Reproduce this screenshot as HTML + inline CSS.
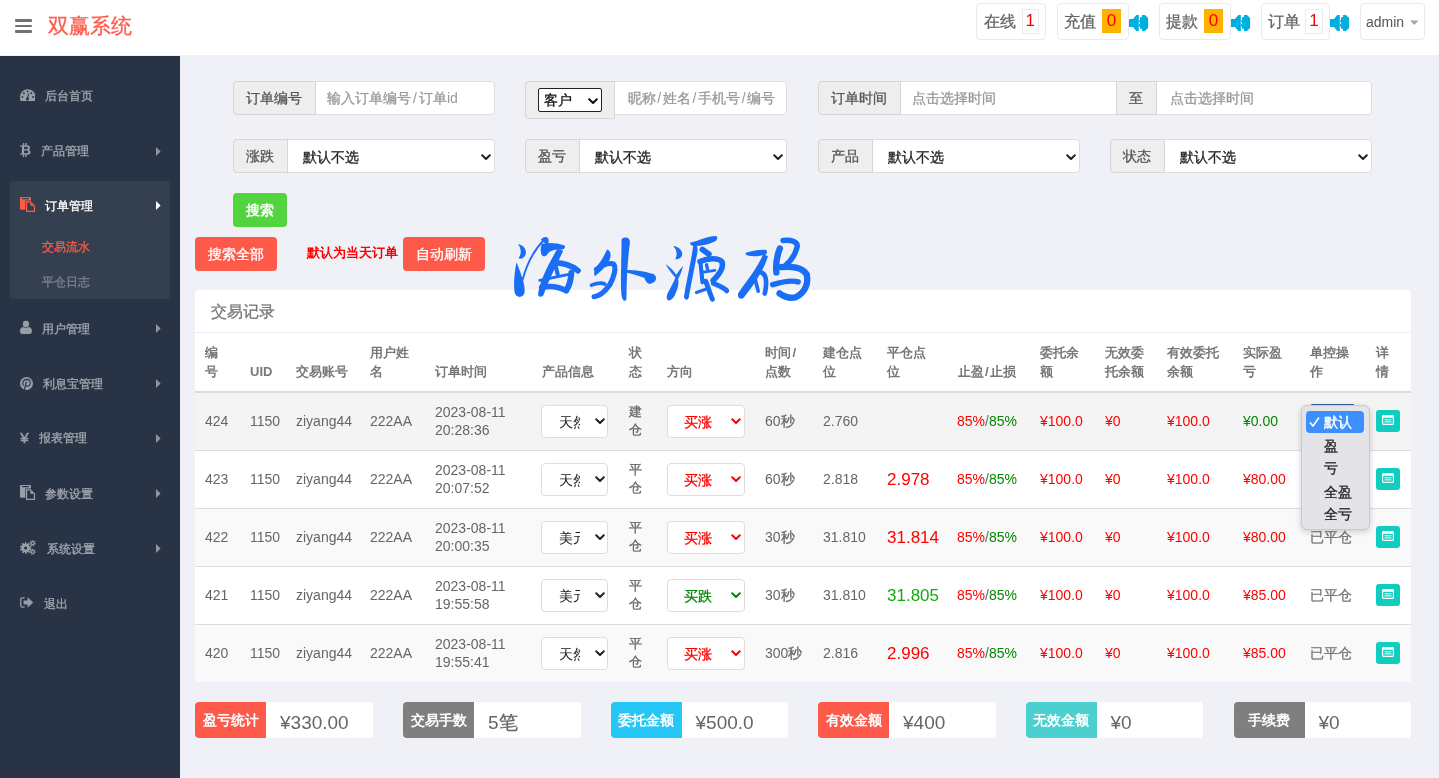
<!DOCTYPE html>
<html><head><meta charset="utf-8"><style>
html,body{margin:0;padding:0;width:1439px;height:778px;overflow:hidden;background:#f0f1f6}
body{position:relative;font-family:"Liberation Sans",sans-serif}
.a{position:absolute;white-space:nowrap}
svg{display:block}
.c{-webkit-text-stroke:0.3px currentColor}
</style></head><body><div id="w" style="position:absolute;left:0;top:0;width:1439px;height:778px;will-change:transform">
<div class="a" style="left:0px;top:0px;width:1439px;height:55px;background:#fff"></div>
<div class="a" style="left:15px;top:18.9px;width:17px;height:2.6999999999999993px;background:#717171;border-radius:1px"></div>
<div class="a" style="left:15px;top:24.5px;width:17px;height:2.6999999999999993px;background:#717171;border-radius:1px"></div>
<div class="a" style="left:15px;top:30.2px;width:17px;height:2.6999999999999993px;background:#717171;border-radius:1px"></div>
<div class="a" style="left:48px;top:10.5px;font-size:21px;line-height:30px;color:#ff5b4d;font-weight:normal;"><span class="c">双赢系统</span></div>
<div class="a" style="left:976px;top:3px;width:70px;height:37px;background:#fff;border:1px solid #e9e9f1;border-radius:4px;box-sizing:border-box"></div>
<div class="a" style="left:984px;top:9.5px;font-size:16px;line-height:24px;color:#666;font-weight:normal;"><span class="c">在线</span></div>
<div class="a" style="left:1021.5px;top:8.5px;width:17.5px;height:25.0px;background:#fff;border:1px solid #e6ecec;box-sizing:border-box"></div>
<div class="a" style="left:1021.5px;top:9px;width:17.5px;height:24px;line-height:24px;text-align:center;font-size:17px;color:#f00">1</div>
<div class="a" style="left:1056.5px;top:3px;width:72.0px;height:37px;background:#fff;border:1px solid #e9e9f1;border-radius:4px;box-sizing:border-box"></div>
<div class="a" style="left:1064px;top:9.5px;font-size:16px;line-height:24px;color:#666;font-weight:normal;"><span class="c">充值</span></div>
<div class="a" style="left:1102px;top:9px;width:19px;height:23.700000000000003px;background:#ffb300;"></div>
<div class="a" style="left:1102px;top:9px;width:19px;height:24px;line-height:24px;text-align:center;font-size:17px;color:#f00">0</div>
<svg class="a" style="left:1129px;top:14px" width="20" height="18" viewBox="0 0 20 18"><path fill="#01afdf" d="M0 5 H4 L7.3 1 H9.8 V17 H7.3 L4 13 H0 Z"/><path fill="#01afdf" d="M11 3.2 H13 V1 H16 L19.1 4 V14 L16 17 H13 V14.8 H11 Z"/><rect x="9.8" y="6.3" width="1.2" height="1.6" fill="#01afdf"/><rect x="9.8" y="10.2" width="1.2" height="2.4" fill="#01afdf"/></svg>
<div class="a" style="left:1158.5px;top:3px;width:72.0px;height:37px;background:#fff;border:1px solid #e9e9f1;border-radius:4px;box-sizing:border-box"></div>
<div class="a" style="left:1166px;top:9.5px;font-size:16px;line-height:24px;color:#666;font-weight:normal;"><span class="c">提款</span></div>
<div class="a" style="left:1204px;top:9px;width:19px;height:23.700000000000003px;background:#ffb300;"></div>
<div class="a" style="left:1204px;top:9px;width:19px;height:24px;line-height:24px;text-align:center;font-size:17px;color:#f00">0</div>
<svg class="a" style="left:1231px;top:14px" width="20" height="18" viewBox="0 0 20 18"><path fill="#01afdf" d="M0 5 H4 L7.3 1 H9.8 V17 H7.3 L4 13 H0 Z"/><path fill="#01afdf" d="M11 3.2 H13 V1 H16 L19.1 4 V14 L16 17 H13 V14.8 H11 Z"/><rect x="9.8" y="6.3" width="1.2" height="1.6" fill="#01afdf"/><rect x="9.8" y="10.2" width="1.2" height="2.4" fill="#01afdf"/></svg>
<div class="a" style="left:1260.5px;top:3px;width:69.0px;height:37px;background:#fff;border:1px solid #e9e9f1;border-radius:4px;box-sizing:border-box"></div>
<div class="a" style="left:1268px;top:9.5px;font-size:16px;line-height:24px;color:#666;font-weight:normal;"><span class="c">订单</span></div>
<div class="a" style="left:1305px;top:8.5px;width:18px;height:25.0px;background:#fff;border:1px solid #e6ecec;box-sizing:border-box"></div>
<div class="a" style="left:1305px;top:9px;width:18px;height:24px;line-height:24px;text-align:center;font-size:17px;color:#f00">1</div>
<svg class="a" style="left:1330px;top:14px" width="20" height="18" viewBox="0 0 20 18"><path fill="#01afdf" d="M0 5 H4 L7.3 1 H9.8 V17 H7.3 L4 13 H0 Z"/><path fill="#01afdf" d="M11 3.2 H13 V1 H16 L19.1 4 V14 L16 17 H13 V14.8 H11 Z"/><rect x="9.8" y="6.3" width="1.2" height="1.6" fill="#01afdf"/><rect x="9.8" y="10.2" width="1.2" height="2.4" fill="#01afdf"/></svg>
<div class="a" style="left:1359.5px;top:3px;width:65.5px;height:37px;background:#fff;border:1px solid #e9e9f1;border-radius:4px;box-sizing:border-box"></div>
<div class="a" style="left:1366px;top:12.0px;font-size:14px;line-height:20px;color:#555;font-weight:normal;">admin</div>
<svg class="a" style="left:1410px;top:20px" width="9" height="6" viewBox="0 0 9 6"><path d="M0 0.5 H8.5 L4.25 5 Z" fill="#a3a3b3"/></svg>
<div class="a" style="left:0px;top:55px;width:1439px;height:723px;background:#f0f1f6"></div>
<div class="a" style="left:0px;top:56px;width:180px;height:722px;background:#283445"></div>
<div class="a" style="left:10px;top:181px;width:160px;height:118px;background:#343f4f;border-radius:4px"></div>
<div class="a" style="left:45px;top:86.5px;font-size:12px;line-height:18px;color:#a2a7ae;font-weight:normal;"><span class="c">后台首页</span></div>
<div class="a" style="left:41px;top:142.0px;font-size:12px;line-height:18px;color:#a2a7ae;font-weight:normal;"><span class="c">产品管理</span></div>
<svg class="a" style="left:156px;top:146.5px" width="5" height="9" viewBox="0 0 5 9"><path d="M0 0 L4.6 4.5 L0 9 Z" fill="#8f969f"/></svg>
<div class="a" style="left:45px;top:196.5px;font-size:12px;line-height:18px;color:#fff;font-weight:normal;"><span class="c">订单管理</span></div>
<svg class="a" style="left:156px;top:201.0px" width="5" height="9" viewBox="0 0 5 9"><path d="M0 0 L4.6 4.5 L0 9 Z" fill="#fff"/></svg>
<div class="a" style="left:42px;top:319.5px;font-size:12px;line-height:18px;color:#a2a7ae;font-weight:normal;"><span class="c">用户管理</span></div>
<svg class="a" style="left:156px;top:324.0px" width="5" height="9" viewBox="0 0 5 9"><path d="M0 0 L4.6 4.5 L0 9 Z" fill="#8f969f"/></svg>
<div class="a" style="left:43px;top:374.5px;font-size:12px;line-height:18px;color:#a2a7ae;font-weight:normal;"><span class="c">利息宝管理</span></div>
<svg class="a" style="left:156px;top:379.0px" width="5" height="9" viewBox="0 0 5 9"><path d="M0 0 L4.6 4.5 L0 9 Z" fill="#8f969f"/></svg>
<div class="a" style="left:39px;top:429.0px;font-size:12px;line-height:18px;color:#a2a7ae;font-weight:normal;"><span class="c">报表管理</span></div>
<svg class="a" style="left:156px;top:433.5px" width="5" height="9" viewBox="0 0 5 9"><path d="M0 0 L4.6 4.5 L0 9 Z" fill="#8f969f"/></svg>
<div class="a" style="left:45px;top:484.5px;font-size:12px;line-height:18px;color:#a2a7ae;font-weight:normal;"><span class="c">参数设置</span></div>
<svg class="a" style="left:156px;top:489.0px" width="5" height="9" viewBox="0 0 5 9"><path d="M0 0 L4.6 4.5 L0 9 Z" fill="#8f969f"/></svg>
<div class="a" style="left:47px;top:539.5px;font-size:12px;line-height:18px;color:#a2a7ae;font-weight:normal;"><span class="c">系统设置</span></div>
<svg class="a" style="left:156px;top:544.0px" width="5" height="9" viewBox="0 0 5 9"><path d="M0 0 L4.6 4.5 L0 9 Z" fill="#8f969f"/></svg>
<div class="a" style="left:44px;top:594.5px;font-size:12px;line-height:18px;color:#a2a7ae;font-weight:normal;"><span class="c">退出</span></div>
<div class="a" style="left:42px;top:237.5px;font-size:12px;line-height:18px;color:#fd5a4a;font-weight:normal;"><span class="c">交易流水</span></div>
<div class="a" style="left:42px;top:272.5px;font-size:12px;line-height:18px;color:#7a838e;font-weight:normal;"><span class="c">平仓日志</span></div>
<svg class="a" style="left:19.9px;top:88.9px" width="15.5" height="12.3" viewBox="0 0 15.5 12.3"><path d="M0.7 12.3 Q0 10.6 0 7.9 A7.75 7.75 0 0 1 15.5 7.9 Q15.5 10.6 14.8 12.3 Z" fill="#989ea7"/><circle cx="7.5" cy="9.9" r="1.55" fill="#283445"/><path d="M7.3 9.8 L8.7 4.6" stroke="#283445" stroke-width="1.1"/><circle cx="2.4" cy="8" r="0.95" fill="#283445"/><circle cx="13.1" cy="8" r="0.95" fill="#283445"/><circle cx="3.9" cy="4.2" r="0.95" fill="#283445"/><circle cx="7.6" cy="2.5" r="0.9" fill="#283445"/><circle cx="11.3" cy="4.2" r="0.95" fill="#283445"/></svg>
<svg class="a" style="left:20px;top:143px" width="11" height="14" viewBox="0 0 11 14"><path fill-rule="evenodd" fill="#989ea7" d="M0.3 2.3 H7 Q10 2.3 10 5 Q10 6.3 8.9 6.9 Q10.6 7.6 10.6 9.3 Q10.6 11.7 7.4 11.7 H0.3 V10.6 H1.9 V3.4 H0.3 Z M4.1 3.7 V6.2 H6.6 Q7.9 6.2 7.9 4.95 Q7.9 3.7 6.6 3.7 Z M4.1 7.6 V10.3 H6.9 Q8.3 10.3 8.3 8.95 Q8.3 7.6 6.9 7.6 Z"/><rect x="2.9" y="0" width="1.3" height="2.5" fill="#989ea7"/><rect x="5.4" y="0" width="1.3" height="2.5" fill="#989ea7"/><rect x="2.9" y="11.5" width="1.3" height="2.5" fill="#989ea7"/><rect x="5.4" y="11.5" width="1.3" height="2.5" fill="#989ea7"/></svg>
<svg class="a" style="left:19.5px;top:197px" width="16" height="16" viewBox="0 0 16 16"><rect x="0" y="0" width="11" height="12.8" rx="1" fill="#fd5a4a"/><rect x="2.1" y="1.1" width="6.8" height="1.1" rx="0.5" fill="#343f4f"/><path d="M5.3 3.6 H10.9 L15.8 8.5 V15.7 H5.3 Z" fill="#343f4f"/><path d="M6.55 4.85 H10.4 L14.45 8.9 V14.35 H6.55 Z" fill="none" stroke="#fd5a4a" stroke-width="1.3"/><path d="M10.4 5.2 V8.8 H14 Z" fill="#fd5a4a"/></svg>
<svg class="a" style="left:20px;top:320px" width="12" height="14" viewBox="0 0 12 14"><path d="M0 11.3 Q0 7.4 3.2 7 H8.7 Q11.9 7.4 11.9 11.3 Q11.9 14 9.4 14 H2.5 Q0 14 0 11.3 Z" fill="#989ea7"/><circle cx="5.95" cy="4" r="3.8" fill="#283445"/><circle cx="5.95" cy="4" r="3.15" fill="#989ea7"/></svg>
<svg class="a" style="left:20px;top:376.5px" width="13" height="13" viewBox="0 0 13 13"><circle cx="6.5" cy="6.5" r="6.5" fill="#989ea7"/><path d="M3.6 8.6 Q2.6 7.4 2.9 5.6 Q3.5 2.4 6.8 2.4 Q10.2 2.5 10.3 5.7 Q10.2 9.3 7.2 9.3 Q6 9.2 5.7 8.5" fill="none" stroke="#283445" stroke-width="1.1"/><path d="M4.3 12.8 L6.4 4.6" stroke="#283445" stroke-width="1.2"/></svg>
<div class="a" style="left:20.2px;top:427.6px;font-size:15px;line-height:20px;color:#989ea7;-webkit-text-stroke:0.55px #989ea7">&#165;</div>
<svg class="a" style="left:19.9px;top:485px" width="16" height="16" viewBox="0 0 16 16"><rect x="0" y="0" width="11" height="12.8" rx="1" fill="#989ea7"/><rect x="2.1" y="1.1" width="6.8" height="1.1" rx="0.5" fill="#283445"/><path d="M5.3 3.6 H10.9 L15.8 8.5 V15.7 H5.3 Z" fill="#283445"/><path d="M6.55 4.85 H10.4 L14.45 8.9 V14.35 H6.55 Z" fill="none" stroke="#989ea7" stroke-width="1.3"/><path d="M10.4 5.2 V8.8 H14 Z" fill="#989ea7"/></svg>
<svg class="a" style="left:20px;top:540px" width="16" height="15" viewBox="0 0 16 15"><circle cx="5.6" cy="8" r="4.6" fill="none" stroke="#989ea7" stroke-width="2.2" stroke-dasharray="1.7 1.2"/><circle cx="5.6" cy="8" r="2.9" fill="none" stroke="#989ea7" stroke-width="2.6"/><circle cx="12.6" cy="3.2" r="2.4" fill="none" stroke="#989ea7" stroke-width="1.3" stroke-dasharray="1 0.9"/><circle cx="12.6" cy="3.2" r="1.5" fill="none" stroke="#989ea7" stroke-width="1.2"/><circle cx="12.6" cy="11.8" r="2.4" fill="none" stroke="#989ea7" stroke-width="1.3" stroke-dasharray="1 0.9"/><circle cx="12.6" cy="11.8" r="1.5" fill="none" stroke="#989ea7" stroke-width="1.2"/></svg>
<svg class="a" style="left:20px;top:597px" width="14" height="11" viewBox="0 0 14 11"><path d="M4.6 0.8 H2.4 Q0.8 0.8 0.8 2.4 V8.6 Q0.8 10.2 2.4 10.2 H4.6" fill="none" stroke="#989ea7" stroke-width="1.3"/><path d="M3.6 3.5 H7.6 V0.3 L13.2 5.5 L7.6 10.7 V7.5 H3.6 Z" fill="#989ea7"/></svg>
<div class="a" style="left:233px;top:81px;width:261.5px;height:34px;background:#fff;border:1px solid #ddd;border-radius:4px;box-sizing:border-box"></div>
<div class="a" style="left:233px;top:81px;width:82.5px;height:34px;background:#eee;border:1px solid #d6d6d6;border-radius:4px 0 0 4px;box-sizing:border-box"></div>
<div class="a" style="left:245.5px;top:88.0px;font-size:14px;line-height:20px;color:#555;font-weight:normal;"><span class="c">订单编号</span></div>
<div class="a" style="left:327px;top:88.0px;font-size:14px;line-height:20px;color:#999;font-weight:normal;"><span class="c">输入订单编号</span><span style="margin:0 2px">/</span><span class="c">订单</span>id</div>
<div class="a" style="left:525px;top:81px;width:262px;height:34px;background:#fff;border:1px solid #ddd;border-radius:4px;box-sizing:border-box"></div>
<div class="a" style="left:525px;top:81px;width:90px;height:38px;background:#eee;border:1px solid #d6d6d6;border-radius:4px 0 0 4px;box-sizing:border-box"></div>
<div class="a" style="left:538px;top:88px;width:64px;height:24px;background:#fff;border:1px solid #222;border-radius:2px;box-sizing:border-box"></div>
<div class="a" style="left:543.5px;top:89.5px;font-size:14px;line-height:20px;color:#111;font-weight:normal;"><span class="c">客户</span></div>
<div class="a" style="left:588px;top:97.5px"><svg width="10" height="7" viewBox="0 0 10 7"><path d="M1.2 1.2 L5 5 L8.8 1.2" fill="none" stroke="#111" stroke-width="2" stroke-linecap="round" stroke-linejoin="round"/></svg></div>
<div class="a" style="left:627.5px;top:88.0px;font-size:14px;line-height:20px;color:#999;font-weight:normal;"><span class="c">昵称</span><span style="margin:0 1.7px">/</span><span class="c">姓名</span><span style="margin:0 1.7px">/</span><span class="c">手机号</span><span style="margin:0 1.7px">/</span><span class="c">编号</span></div>
<div class="a" style="left:818px;top:81px;width:554px;height:34px;background:#fff;border:1px solid #ddd;border-radius:4px;box-sizing:border-box"></div>
<div class="a" style="left:818px;top:81px;width:82.5px;height:34px;background:#eee;border:1px solid #d6d6d6;border-radius:4px 0 0 4px;box-sizing:border-box"></div>
<div class="a" style="left:830.5px;top:88.0px;font-size:14px;line-height:20px;color:#555;font-weight:normal;"><span class="c">订单时间</span></div>
<div class="a" style="left:912px;top:88.0px;font-size:14px;line-height:20px;color:#999;font-weight:normal;"><span class="c">点击选择时间</span></div>
<div class="a" style="left:1116px;top:81px;width:40.5px;height:34px;background:#eee;border:1px solid #d6d6d6;box-sizing:border-box"></div>
<div class="a" style="left:1128.5px;top:88.0px;font-size:14px;line-height:20px;color:#555;font-weight:normal;"><span class="c">至</span></div>
<div class="a" style="left:1169.5px;top:88.0px;font-size:14px;line-height:20px;color:#999;font-weight:normal;"><span class="c">点击选择时间</span></div>
<div class="a" style="left:233px;top:139px;width:261.5px;height:34px;background:#fff;border:1px solid #ddd;border-radius:4px;box-sizing:border-box"></div>
<div class="a" style="left:233px;top:139px;width:54.5px;height:34px;background:#eee;border:1px solid #d6d6d6;border-radius:4px 0 0 4px;box-sizing:border-box"></div>
<div class="a" style="left:245.5px;top:146.0px;font-size:14px;line-height:20px;color:#555;font-weight:normal;"><span class="c">涨跌</span></div>
<div class="a" style="left:302.5px;top:147.0px;font-size:14px;line-height:20px;color:#222;font-weight:normal;"><span class="c">默认不选</span></div>
<div class="a" style="left:480.5px;top:153.5px"><svg width="10" height="7" viewBox="0 0 10 7"><path d="M1.2 1.2 L5 5 L8.8 1.2" fill="none" stroke="#222" stroke-width="2" stroke-linecap="round" stroke-linejoin="round"/></svg></div>
<div class="a" style="left:525px;top:139px;width:262px;height:34px;background:#fff;border:1px solid #ddd;border-radius:4px;box-sizing:border-box"></div>
<div class="a" style="left:525px;top:139px;width:54.5px;height:34px;background:#eee;border:1px solid #d6d6d6;border-radius:4px 0 0 4px;box-sizing:border-box"></div>
<div class="a" style="left:537.5px;top:146.0px;font-size:14px;line-height:20px;color:#555;font-weight:normal;"><span class="c">盈亏</span></div>
<div class="a" style="left:594.5px;top:147.0px;font-size:14px;line-height:20px;color:#222;font-weight:normal;"><span class="c">默认不选</span></div>
<div class="a" style="left:773px;top:153.5px"><svg width="10" height="7" viewBox="0 0 10 7"><path d="M1.2 1.2 L5 5 L8.8 1.2" fill="none" stroke="#222" stroke-width="2" stroke-linecap="round" stroke-linejoin="round"/></svg></div>
<div class="a" style="left:818px;top:139px;width:261.5px;height:34px;background:#fff;border:1px solid #ddd;border-radius:4px;box-sizing:border-box"></div>
<div class="a" style="left:818px;top:139px;width:54.5px;height:34px;background:#eee;border:1px solid #d6d6d6;border-radius:4px 0 0 4px;box-sizing:border-box"></div>
<div class="a" style="left:830.5px;top:146.0px;font-size:14px;line-height:20px;color:#555;font-weight:normal;"><span class="c">产品</span></div>
<div class="a" style="left:887.5px;top:147.0px;font-size:14px;line-height:20px;color:#222;font-weight:normal;"><span class="c">默认不选</span></div>
<div class="a" style="left:1065.5px;top:153.5px"><svg width="10" height="7" viewBox="0 0 10 7"><path d="M1.2 1.2 L5 5 L8.8 1.2" fill="none" stroke="#222" stroke-width="2" stroke-linecap="round" stroke-linejoin="round"/></svg></div>
<div class="a" style="left:1110px;top:139px;width:262px;height:34px;background:#fff;border:1px solid #ddd;border-radius:4px;box-sizing:border-box"></div>
<div class="a" style="left:1110px;top:139px;width:54.5px;height:34px;background:#eee;border:1px solid #d6d6d6;border-radius:4px 0 0 4px;box-sizing:border-box"></div>
<div class="a" style="left:1122.5px;top:146.0px;font-size:14px;line-height:20px;color:#555;font-weight:normal;"><span class="c">状态</span></div>
<div class="a" style="left:1179.5px;top:147.0px;font-size:14px;line-height:20px;color:#222;font-weight:normal;"><span class="c">默认不选</span></div>
<div class="a" style="left:1358px;top:153.5px"><svg width="10" height="7" viewBox="0 0 10 7"><path d="M1.2 1.2 L5 5 L8.8 1.2" fill="none" stroke="#222" stroke-width="2" stroke-linecap="round" stroke-linejoin="round"/></svg></div>
<div class="a" style="left:233px;top:193px;width:54px;height:34px;background:#52d43f;border-radius:4px"></div>
<div class="a" style="left:246px;top:200.0px;font-size:14px;line-height:20px;color:#fff;font-weight:bold;">搜索</div>
<div class="a" style="left:195px;top:237px;width:82px;height:34px;background:#fd5a4a;border-radius:4px"></div>
<div class="a" style="left:208px;top:244.0px;font-size:14px;line-height:20px;color:#fff;font-weight:normal;"><span class="c">搜索全部</span></div>
<div class="a" style="left:307px;top:243.5px;font-size:13px;line-height:18px;color:#f00;font-weight:bold;">默认为当天订单</div>
<div class="a" style="left:403px;top:237px;width:82px;height:34px;background:#fd5a4a;border-radius:4px"></div>
<div class="a" style="left:416px;top:244.0px;font-size:14px;line-height:20px;color:#fff;font-weight:normal;"><span class="c">自动刷新</span></div>
<div class="a" style="left:195px;top:290px;width:1216px;height:392px;background:#fff;border-radius:4px"></div>
<div class="a" style="left:210.5px;top:300.5px;font-size:16px;line-height:22px;color:#777;font-weight:normal;"><span class="c">交易记录</span></div>
<div class="a" style="left:195px;top:332px;width:1216px;height:1px;background:#edf0f5"></div>
<div class="a" style="left:195px;top:391px;width:1216px;height:2px;background:#dcdcdc"></div>
<div class="a" style="left:205px;top:343.0px;font-size:13px;line-height:19px;color:#777;font-weight:bold;">编</div>
<div class="a" style="left:205px;top:362.0px;font-size:13px;line-height:19px;color:#777;font-weight:bold;">号</div>
<div class="a" style="left:250px;top:362.0px;font-size:13px;line-height:19px;color:#777;font-weight:bold;">UID</div>
<div class="a" style="left:296px;top:362.0px;font-size:13px;line-height:19px;color:#777;font-weight:bold;">交易账号</div>
<div class="a" style="left:370px;top:343.0px;font-size:13px;line-height:19px;color:#777;font-weight:bold;">用户姓</div>
<div class="a" style="left:370px;top:362.0px;font-size:13px;line-height:19px;color:#777;font-weight:bold;">名</div>
<div class="a" style="left:435px;top:362.0px;font-size:13px;line-height:19px;color:#777;font-weight:bold;">订单时间</div>
<div class="a" style="left:541.5px;top:362.0px;font-size:13px;line-height:19px;color:#777;font-weight:bold;">产品信息</div>
<div class="a" style="left:628.5px;top:343.0px;font-size:13px;line-height:19px;color:#777;font-weight:bold;">状</div>
<div class="a" style="left:628.5px;top:362.0px;font-size:13px;line-height:19px;color:#777;font-weight:bold;">态</div>
<div class="a" style="left:667px;top:362.0px;font-size:13px;line-height:19px;color:#777;font-weight:bold;">方向</div>
<div class="a" style="left:765px;top:343.0px;font-size:13px;line-height:19px;color:#777;font-weight:bold;">时间<span style="margin:0 1.5px">/</span></div>
<div class="a" style="left:765px;top:362.0px;font-size:13px;line-height:19px;color:#777;font-weight:bold;">点数</div>
<div class="a" style="left:823px;top:343.0px;font-size:13px;line-height:19px;color:#777;font-weight:bold;">建仓点</div>
<div class="a" style="left:823px;top:362.0px;font-size:13px;line-height:19px;color:#777;font-weight:bold;">位</div>
<div class="a" style="left:887px;top:343.0px;font-size:13px;line-height:19px;color:#777;font-weight:bold;">平仓点</div>
<div class="a" style="left:887px;top:362.0px;font-size:13px;line-height:19px;color:#777;font-weight:bold;">位</div>
<div class="a" style="left:957.5px;top:362.0px;font-size:13px;line-height:19px;color:#777;font-weight:bold;">止盈<span style="margin:0 1.5px">/</span>止损</div>
<div class="a" style="left:1040px;top:343.0px;font-size:13px;line-height:19px;color:#777;font-weight:bold;">委托余</div>
<div class="a" style="left:1040px;top:362.0px;font-size:13px;line-height:19px;color:#777;font-weight:bold;">额</div>
<div class="a" style="left:1105px;top:343.0px;font-size:13px;line-height:19px;color:#777;font-weight:bold;">无效委</div>
<div class="a" style="left:1105px;top:362.0px;font-size:13px;line-height:19px;color:#777;font-weight:bold;">托余额</div>
<div class="a" style="left:1167px;top:343.0px;font-size:13px;line-height:19px;color:#777;font-weight:bold;">有效委托</div>
<div class="a" style="left:1167px;top:362.0px;font-size:13px;line-height:19px;color:#777;font-weight:bold;">余额</div>
<div class="a" style="left:1243px;top:343.0px;font-size:13px;line-height:19px;color:#777;font-weight:bold;">实际盈</div>
<div class="a" style="left:1243px;top:362.0px;font-size:13px;line-height:19px;color:#777;font-weight:bold;">亏</div>
<div class="a" style="left:1310px;top:343.0px;font-size:13px;line-height:19px;color:#777;font-weight:bold;">单控操</div>
<div class="a" style="left:1310px;top:362.0px;font-size:13px;line-height:19px;color:#777;font-weight:bold;">作</div>
<div class="a" style="left:1376px;top:343.0px;font-size:13px;line-height:19px;color:#777;font-weight:bold;">详</div>
<div class="a" style="left:1376px;top:362.0px;font-size:13px;line-height:19px;color:#777;font-weight:bold;">情</div>
<div class="a" style="left:195px;top:393px;width:1216px;height:57px;background:#f4f4f4"></div>
<div class="a" style="left:195px;top:450px;width:1216px;height:1px;background:#ddd"></div>
<div class="a" style="left:205px;top:410.8px;font-size:14px;line-height:20px;color:#666;font-weight:normal;">424</div>
<div class="a" style="left:250px;top:410.8px;font-size:14px;line-height:20px;color:#666;font-weight:normal;">1150</div>
<div class="a" style="left:296px;top:410.8px;font-size:14px;line-height:20px;color:#666;font-weight:normal;">ziyang44</div>
<div class="a" style="left:370px;top:410.8px;font-size:14px;line-height:20px;color:#666;font-weight:normal;">222AA</div>
<div class="a" style="left:435px;top:402.8px;font-size:14px;line-height:18px;color:#666;font-weight:normal;">2023-08-11</div>
<div class="a" style="left:435px;top:420.8px;font-size:14px;line-height:18px;color:#666;font-weight:normal;">20:28:36</div>
<div class="a" style="left:541px;top:404.5px;width:66.5px;height:33.0px;background:#fff;border:1px solid #ddd;border-radius:4px;box-sizing:border-box"></div>
<div class="a" style="left:558.5px;top:411.8px;width:21px;overflow:hidden;white-space:nowrap;font-size:14px;line-height:20px;color:#222">天然</div>
<div class="a" style="left:594.5px;top:418.3px"><svg width="10" height="7" viewBox="0 0 10 7"><path d="M1.2 1.2 L5 5 L8.8 1.2" fill="none" stroke="#222" stroke-width="2" stroke-linecap="round" stroke-linejoin="round"/></svg></div>
<div class="a" style="left:628.5px;top:402.8px;font-size:13px;line-height:18px;color:#666;font-weight:normal;"><span class="c">建</span></div>
<div class="a" style="left:628.5px;top:420.8px;font-size:13px;line-height:18px;color:#666;font-weight:normal;"><span class="c">仓</span></div>
<div class="a" style="left:667px;top:404.5px;width:77.5px;height:33.0px;background:#fff;border:1px solid #ddd;border-radius:4px;box-sizing:border-box"></div>
<div class="a" style="left:684px;top:411.8px;font-size:14px;line-height:20px;color:#f00;font-weight:normal;"><span class="c">买涨</span></div>
<div class="a" style="left:731px;top:418.3px"><svg width="10" height="7" viewBox="0 0 10 7"><path d="M1.2 1.2 L5 5 L8.8 1.2" fill="none" stroke="#f00" stroke-width="2" stroke-linecap="round" stroke-linejoin="round"/></svg></div>
<div class="a" style="left:765px;top:410.8px;font-size:14px;line-height:20px;color:#666;font-weight:normal;">60<span class="c">秒</span></div>
<div class="a" style="left:823px;top:410.8px;font-size:14px;line-height:20px;color:#666;font-weight:normal;">2.760</div>
<div class="a" style="left:957px;top:410.8px;font-size:14px;line-height:20px;color:#666;font-weight:normal;"><span style="color:#f00">85%</span>/<span style="color:#080">85%</span></div>
<div class="a" style="left:1040px;top:410.8px;font-size:14px;line-height:20px;color:#f00;font-weight:normal;">¥100.0</div>
<div class="a" style="left:1105px;top:410.8px;font-size:14px;line-height:20px;color:#f00;font-weight:normal;">¥0</div>
<div class="a" style="left:1167px;top:410.8px;font-size:14px;line-height:20px;color:#f00;font-weight:normal;">¥100.0</div>
<div class="a" style="left:1243px;top:410.8px;font-size:14px;line-height:20px;color:#080;font-weight:normal;">¥0.00</div>
<div class="a" style="left:1376px;top:409.8px;width:24px;height:22.0px;background:#0fcebf;border-radius:3px"></div>
<svg class="a" style="left:1382px;top:415.3px" width="12" height="10" viewBox="0 0 12 10"><rect x="0.6" y="0.6" width="10.8" height="8.8" rx="1" fill="none" stroke="#fff" stroke-width="1.2"/><rect x="0.6" y="0.6" width="10.8" height="2.2" fill="#fff"/><rect x="2.5" y="4.3" width="7" height="1" fill="#fff"/><rect x="2.5" y="6.4" width="7" height="1" fill="#fff"/></svg>
<div class="a" style="left:195px;top:451px;width:1216px;height:57px;background:#fff"></div>
<div class="a" style="left:195px;top:508px;width:1216px;height:1px;background:#ddd"></div>
<div class="a" style="left:205px;top:468.8px;font-size:14px;line-height:20px;color:#666;font-weight:normal;">423</div>
<div class="a" style="left:250px;top:468.8px;font-size:14px;line-height:20px;color:#666;font-weight:normal;">1150</div>
<div class="a" style="left:296px;top:468.8px;font-size:14px;line-height:20px;color:#666;font-weight:normal;">ziyang44</div>
<div class="a" style="left:370px;top:468.8px;font-size:14px;line-height:20px;color:#666;font-weight:normal;">222AA</div>
<div class="a" style="left:435px;top:460.8px;font-size:14px;line-height:18px;color:#666;font-weight:normal;">2023-08-11</div>
<div class="a" style="left:435px;top:478.8px;font-size:14px;line-height:18px;color:#666;font-weight:normal;">20:07:52</div>
<div class="a" style="left:541px;top:462.5px;width:66.5px;height:33.0px;background:#fff;border:1px solid #ddd;border-radius:4px;box-sizing:border-box"></div>
<div class="a" style="left:558.5px;top:469.8px;width:21px;overflow:hidden;white-space:nowrap;font-size:14px;line-height:20px;color:#222">天然</div>
<div class="a" style="left:594.5px;top:476.3px"><svg width="10" height="7" viewBox="0 0 10 7"><path d="M1.2 1.2 L5 5 L8.8 1.2" fill="none" stroke="#222" stroke-width="2" stroke-linecap="round" stroke-linejoin="round"/></svg></div>
<div class="a" style="left:628.5px;top:460.8px;font-size:13px;line-height:18px;color:#666;font-weight:normal;"><span class="c">平</span></div>
<div class="a" style="left:628.5px;top:478.8px;font-size:13px;line-height:18px;color:#666;font-weight:normal;"><span class="c">仓</span></div>
<div class="a" style="left:667px;top:462.5px;width:77.5px;height:33.0px;background:#fff;border:1px solid #ddd;border-radius:4px;box-sizing:border-box"></div>
<div class="a" style="left:684px;top:469.8px;font-size:14px;line-height:20px;color:#f00;font-weight:normal;"><span class="c">买涨</span></div>
<div class="a" style="left:731px;top:476.3px"><svg width="10" height="7" viewBox="0 0 10 7"><path d="M1.2 1.2 L5 5 L8.8 1.2" fill="none" stroke="#f00" stroke-width="2" stroke-linecap="round" stroke-linejoin="round"/></svg></div>
<div class="a" style="left:765px;top:468.8px;font-size:14px;line-height:20px;color:#666;font-weight:normal;">60<span class="c">秒</span></div>
<div class="a" style="left:823px;top:468.8px;font-size:14px;line-height:20px;color:#666;font-weight:normal;">2.818</div>
<div class="a" style="left:887px;top:469.3px;font-size:17px;line-height:22px;color:#f00;font-weight:normal;">2.978</div>
<div class="a" style="left:957px;top:468.8px;font-size:14px;line-height:20px;color:#666;font-weight:normal;"><span style="color:#f00">85%</span>/<span style="color:#080">85%</span></div>
<div class="a" style="left:1040px;top:468.8px;font-size:14px;line-height:20px;color:#f00;font-weight:normal;">¥100.0</div>
<div class="a" style="left:1105px;top:468.8px;font-size:14px;line-height:20px;color:#f00;font-weight:normal;">¥0</div>
<div class="a" style="left:1167px;top:468.8px;font-size:14px;line-height:20px;color:#f00;font-weight:normal;">¥100.0</div>
<div class="a" style="left:1243px;top:468.8px;font-size:14px;line-height:20px;color:#f00;font-weight:normal;">¥80.00</div>
<div class="a" style="left:1310px;top:468.8px;font-size:14px;line-height:20px;color:#777;font-weight:normal;"><span class="c">已平仓</span></div>
<div class="a" style="left:1376px;top:467.8px;width:24px;height:22.0px;background:#0fcebf;border-radius:3px"></div>
<svg class="a" style="left:1382px;top:473.3px" width="12" height="10" viewBox="0 0 12 10"><rect x="0.6" y="0.6" width="10.8" height="8.8" rx="1" fill="none" stroke="#fff" stroke-width="1.2"/><rect x="0.6" y="0.6" width="10.8" height="2.2" fill="#fff"/><rect x="2.5" y="4.3" width="7" height="1" fill="#fff"/><rect x="2.5" y="6.4" width="7" height="1" fill="#fff"/></svg>
<div class="a" style="left:195px;top:509px;width:1216px;height:57px;background:#f9f9f9"></div>
<div class="a" style="left:195px;top:566px;width:1216px;height:1px;background:#ddd"></div>
<div class="a" style="left:205px;top:526.8px;font-size:14px;line-height:20px;color:#666;font-weight:normal;">422</div>
<div class="a" style="left:250px;top:526.8px;font-size:14px;line-height:20px;color:#666;font-weight:normal;">1150</div>
<div class="a" style="left:296px;top:526.8px;font-size:14px;line-height:20px;color:#666;font-weight:normal;">ziyang44</div>
<div class="a" style="left:370px;top:526.8px;font-size:14px;line-height:20px;color:#666;font-weight:normal;">222AA</div>
<div class="a" style="left:435px;top:518.8px;font-size:14px;line-height:18px;color:#666;font-weight:normal;">2023-08-11</div>
<div class="a" style="left:435px;top:536.8px;font-size:14px;line-height:18px;color:#666;font-weight:normal;">20:00:35</div>
<div class="a" style="left:541px;top:520.5px;width:66.5px;height:33.0px;background:#fff;border:1px solid #ddd;border-radius:4px;box-sizing:border-box"></div>
<div class="a" style="left:558.5px;top:527.8px;width:21px;overflow:hidden;white-space:nowrap;font-size:14px;line-height:20px;color:#222">美元</div>
<div class="a" style="left:594.5px;top:534.3px"><svg width="10" height="7" viewBox="0 0 10 7"><path d="M1.2 1.2 L5 5 L8.8 1.2" fill="none" stroke="#222" stroke-width="2" stroke-linecap="round" stroke-linejoin="round"/></svg></div>
<div class="a" style="left:628.5px;top:518.8px;font-size:13px;line-height:18px;color:#666;font-weight:normal;"><span class="c">平</span></div>
<div class="a" style="left:628.5px;top:536.8px;font-size:13px;line-height:18px;color:#666;font-weight:normal;"><span class="c">仓</span></div>
<div class="a" style="left:667px;top:520.5px;width:77.5px;height:33.0px;background:#fff;border:1px solid #ddd;border-radius:4px;box-sizing:border-box"></div>
<div class="a" style="left:684px;top:527.8px;font-size:14px;line-height:20px;color:#f00;font-weight:normal;"><span class="c">买涨</span></div>
<div class="a" style="left:731px;top:534.3px"><svg width="10" height="7" viewBox="0 0 10 7"><path d="M1.2 1.2 L5 5 L8.8 1.2" fill="none" stroke="#f00" stroke-width="2" stroke-linecap="round" stroke-linejoin="round"/></svg></div>
<div class="a" style="left:765px;top:526.8px;font-size:14px;line-height:20px;color:#666;font-weight:normal;">30<span class="c">秒</span></div>
<div class="a" style="left:823px;top:526.8px;font-size:14px;line-height:20px;color:#666;font-weight:normal;">31.810</div>
<div class="a" style="left:887px;top:527.3px;font-size:17px;line-height:22px;color:#f00;font-weight:normal;">31.814</div>
<div class="a" style="left:957px;top:526.8px;font-size:14px;line-height:20px;color:#666;font-weight:normal;"><span style="color:#f00">85%</span>/<span style="color:#080">85%</span></div>
<div class="a" style="left:1040px;top:526.8px;font-size:14px;line-height:20px;color:#f00;font-weight:normal;">¥100.0</div>
<div class="a" style="left:1105px;top:526.8px;font-size:14px;line-height:20px;color:#f00;font-weight:normal;">¥0</div>
<div class="a" style="left:1167px;top:526.8px;font-size:14px;line-height:20px;color:#f00;font-weight:normal;">¥100.0</div>
<div class="a" style="left:1243px;top:526.8px;font-size:14px;line-height:20px;color:#f00;font-weight:normal;">¥80.00</div>
<div class="a" style="left:1310px;top:526.8px;font-size:14px;line-height:20px;color:#777;font-weight:normal;"><span class="c">已平仓</span></div>
<div class="a" style="left:1376px;top:525.8px;width:24px;height:22.0px;background:#0fcebf;border-radius:3px"></div>
<svg class="a" style="left:1382px;top:531.3px" width="12" height="10" viewBox="0 0 12 10"><rect x="0.6" y="0.6" width="10.8" height="8.8" rx="1" fill="none" stroke="#fff" stroke-width="1.2"/><rect x="0.6" y="0.6" width="10.8" height="2.2" fill="#fff"/><rect x="2.5" y="4.3" width="7" height="1" fill="#fff"/><rect x="2.5" y="6.4" width="7" height="1" fill="#fff"/></svg>
<div class="a" style="left:195px;top:567px;width:1216px;height:57px;background:#fff"></div>
<div class="a" style="left:195px;top:624px;width:1216px;height:1px;background:#ddd"></div>
<div class="a" style="left:205px;top:584.8px;font-size:14px;line-height:20px;color:#666;font-weight:normal;">421</div>
<div class="a" style="left:250px;top:584.8px;font-size:14px;line-height:20px;color:#666;font-weight:normal;">1150</div>
<div class="a" style="left:296px;top:584.8px;font-size:14px;line-height:20px;color:#666;font-weight:normal;">ziyang44</div>
<div class="a" style="left:370px;top:584.8px;font-size:14px;line-height:20px;color:#666;font-weight:normal;">222AA</div>
<div class="a" style="left:435px;top:576.8px;font-size:14px;line-height:18px;color:#666;font-weight:normal;">2023-08-11</div>
<div class="a" style="left:435px;top:594.8px;font-size:14px;line-height:18px;color:#666;font-weight:normal;">19:55:58</div>
<div class="a" style="left:541px;top:578.5px;width:66.5px;height:33.0px;background:#fff;border:1px solid #ddd;border-radius:4px;box-sizing:border-box"></div>
<div class="a" style="left:558.5px;top:585.8px;width:21px;overflow:hidden;white-space:nowrap;font-size:14px;line-height:20px;color:#222">美元</div>
<div class="a" style="left:594.5px;top:592.3px"><svg width="10" height="7" viewBox="0 0 10 7"><path d="M1.2 1.2 L5 5 L8.8 1.2" fill="none" stroke="#222" stroke-width="2" stroke-linecap="round" stroke-linejoin="round"/></svg></div>
<div class="a" style="left:628.5px;top:576.8px;font-size:13px;line-height:18px;color:#666;font-weight:normal;"><span class="c">平</span></div>
<div class="a" style="left:628.5px;top:594.8px;font-size:13px;line-height:18px;color:#666;font-weight:normal;"><span class="c">仓</span></div>
<div class="a" style="left:667px;top:578.5px;width:77.5px;height:33.0px;background:#fff;border:1px solid #ddd;border-radius:4px;box-sizing:border-box"></div>
<div class="a" style="left:684px;top:585.8px;font-size:14px;line-height:20px;color:#080;font-weight:normal;"><span class="c">买跌</span></div>
<div class="a" style="left:731px;top:592.3px"><svg width="10" height="7" viewBox="0 0 10 7"><path d="M1.2 1.2 L5 5 L8.8 1.2" fill="none" stroke="#080" stroke-width="2" stroke-linecap="round" stroke-linejoin="round"/></svg></div>
<div class="a" style="left:765px;top:584.8px;font-size:14px;line-height:20px;color:#666;font-weight:normal;">30<span class="c">秒</span></div>
<div class="a" style="left:823px;top:584.8px;font-size:14px;line-height:20px;color:#666;font-weight:normal;">31.810</div>
<div class="a" style="left:887px;top:585.3px;font-size:17px;line-height:22px;color:#1a1;font-weight:normal;">31.805</div>
<div class="a" style="left:957px;top:584.8px;font-size:14px;line-height:20px;color:#666;font-weight:normal;"><span style="color:#f00">85%</span>/<span style="color:#080">85%</span></div>
<div class="a" style="left:1040px;top:584.8px;font-size:14px;line-height:20px;color:#f00;font-weight:normal;">¥100.0</div>
<div class="a" style="left:1105px;top:584.8px;font-size:14px;line-height:20px;color:#f00;font-weight:normal;">¥0</div>
<div class="a" style="left:1167px;top:584.8px;font-size:14px;line-height:20px;color:#f00;font-weight:normal;">¥100.0</div>
<div class="a" style="left:1243px;top:584.8px;font-size:14px;line-height:20px;color:#f00;font-weight:normal;">¥85.00</div>
<div class="a" style="left:1310px;top:584.8px;font-size:14px;line-height:20px;color:#777;font-weight:normal;"><span class="c">已平仓</span></div>
<div class="a" style="left:1376px;top:583.8px;width:24px;height:22.0px;background:#0fcebf;border-radius:3px"></div>
<svg class="a" style="left:1382px;top:589.3px" width="12" height="10" viewBox="0 0 12 10"><rect x="0.6" y="0.6" width="10.8" height="8.8" rx="1" fill="none" stroke="#fff" stroke-width="1.2"/><rect x="0.6" y="0.6" width="10.8" height="2.2" fill="#fff"/><rect x="2.5" y="4.3" width="7" height="1" fill="#fff"/><rect x="2.5" y="6.4" width="7" height="1" fill="#fff"/></svg>
<div class="a" style="left:195px;top:625px;width:1216px;height:57px;background:#f9f9f9"></div>
<div class="a" style="left:205px;top:642.8px;font-size:14px;line-height:20px;color:#666;font-weight:normal;">420</div>
<div class="a" style="left:250px;top:642.8px;font-size:14px;line-height:20px;color:#666;font-weight:normal;">1150</div>
<div class="a" style="left:296px;top:642.8px;font-size:14px;line-height:20px;color:#666;font-weight:normal;">ziyang44</div>
<div class="a" style="left:370px;top:642.8px;font-size:14px;line-height:20px;color:#666;font-weight:normal;">222AA</div>
<div class="a" style="left:435px;top:634.8px;font-size:14px;line-height:18px;color:#666;font-weight:normal;">2023-08-11</div>
<div class="a" style="left:435px;top:652.8px;font-size:14px;line-height:18px;color:#666;font-weight:normal;">19:55:41</div>
<div class="a" style="left:541px;top:636.5px;width:66.5px;height:33.0px;background:#fff;border:1px solid #ddd;border-radius:4px;box-sizing:border-box"></div>
<div class="a" style="left:558.5px;top:643.8px;width:21px;overflow:hidden;white-space:nowrap;font-size:14px;line-height:20px;color:#222">天然</div>
<div class="a" style="left:594.5px;top:650.3px"><svg width="10" height="7" viewBox="0 0 10 7"><path d="M1.2 1.2 L5 5 L8.8 1.2" fill="none" stroke="#222" stroke-width="2" stroke-linecap="round" stroke-linejoin="round"/></svg></div>
<div class="a" style="left:628.5px;top:634.8px;font-size:13px;line-height:18px;color:#666;font-weight:normal;"><span class="c">平</span></div>
<div class="a" style="left:628.5px;top:652.8px;font-size:13px;line-height:18px;color:#666;font-weight:normal;"><span class="c">仓</span></div>
<div class="a" style="left:667px;top:636.5px;width:77.5px;height:33.0px;background:#fff;border:1px solid #ddd;border-radius:4px;box-sizing:border-box"></div>
<div class="a" style="left:684px;top:643.8px;font-size:14px;line-height:20px;color:#f00;font-weight:normal;"><span class="c">买涨</span></div>
<div class="a" style="left:731px;top:650.3px"><svg width="10" height="7" viewBox="0 0 10 7"><path d="M1.2 1.2 L5 5 L8.8 1.2" fill="none" stroke="#f00" stroke-width="2" stroke-linecap="round" stroke-linejoin="round"/></svg></div>
<div class="a" style="left:765px;top:642.8px;font-size:14px;line-height:20px;color:#666;font-weight:normal;">300<span class="c">秒</span></div>
<div class="a" style="left:823px;top:642.8px;font-size:14px;line-height:20px;color:#666;font-weight:normal;">2.816</div>
<div class="a" style="left:887px;top:643.3px;font-size:17px;line-height:22px;color:#f00;font-weight:normal;">2.996</div>
<div class="a" style="left:957px;top:642.8px;font-size:14px;line-height:20px;color:#666;font-weight:normal;"><span style="color:#f00">85%</span>/<span style="color:#080">85%</span></div>
<div class="a" style="left:1040px;top:642.8px;font-size:14px;line-height:20px;color:#f00;font-weight:normal;">¥100.0</div>
<div class="a" style="left:1105px;top:642.8px;font-size:14px;line-height:20px;color:#f00;font-weight:normal;">¥0</div>
<div class="a" style="left:1167px;top:642.8px;font-size:14px;line-height:20px;color:#f00;font-weight:normal;">¥100.0</div>
<div class="a" style="left:1243px;top:642.8px;font-size:14px;line-height:20px;color:#f00;font-weight:normal;">¥85.00</div>
<div class="a" style="left:1310px;top:642.8px;font-size:14px;line-height:20px;color:#777;font-weight:normal;"><span class="c">已平仓</span></div>
<div class="a" style="left:1376px;top:641.8px;width:24px;height:22.0px;background:#0fcebf;border-radius:3px"></div>
<svg class="a" style="left:1382px;top:647.3px" width="12" height="10" viewBox="0 0 12 10"><rect x="0.6" y="0.6" width="10.8" height="8.8" rx="1" fill="none" stroke="#fff" stroke-width="1.2"/><rect x="0.6" y="0.6" width="10.8" height="2.2" fill="#fff"/><rect x="2.5" y="4.3" width="7" height="1" fill="#fff"/><rect x="2.5" y="6.4" width="7" height="1" fill="#fff"/></svg>
<div class="a" style="left:1310.5px;top:403.5px;width:43.5px;height:2.5px;background:#2f5f9a;border-radius:2px"></div>
<div class="a" style="left:1301px;top:405px;width:68.5px;height:125px;background:#e4e3e8;border:1px solid #c9c8cd;border-radius:6px;box-sizing:border-box;box-shadow:0 2px 6px rgba(0,0,0,0.18)"></div>
<div class="a" style="left:1306px;top:410.5px;width:58px;height:22.5px;background:#3c8ffc;border-radius:4px"></div>
<div class="a" style="left:1309px;top:416px;"><svg width="11" height="12" viewBox="0 0 11 12"><path d="M1 6.5 L4 10 L10 1.5" fill="none" stroke="#fff" stroke-width="1.6"/></svg></div>
<div class="a" style="left:1324px;top:411.5px;font-size:14px;line-height:20px;color:#fff;font-weight:normal;"><span style="-webkit-text-stroke:0.4px #fff">默认</span></div>
<div class="a" style="left:1324px;top:435.5px;font-size:14px;line-height:20px;color:#222;font-weight:normal;"><span style="-webkit-text-stroke:0.35px #333">盈</span></div>
<div class="a" style="left:1324px;top:458.0px;font-size:14px;line-height:20px;color:#222;font-weight:normal;"><span style="-webkit-text-stroke:0.35px #333">亏</span></div>
<div class="a" style="left:1324px;top:481.5px;font-size:14px;line-height:20px;color:#222;font-weight:normal;"><span style="-webkit-text-stroke:0.35px #333">全盈</span></div>
<div class="a" style="left:1324px;top:504.0px;font-size:14px;line-height:20px;color:#222;font-weight:normal;"><span style="-webkit-text-stroke:0.35px #333">全亏</span></div>
<div class="a" style="left:195px;top:702px;width:177.5px;height:36px;background:#fff;border-radius:4px"></div>
<div class="a" style="left:195px;top:702px;width:71px;height:36px;background:#fd5a4a;border-radius:4px 0 0 4px;color:#fff;font-size:14px;font-weight:bold;line-height:36px;text-align:center">盈亏统计</div>
<div class="a" style="left:280px;top:710.5px;font-size:19px;line-height:24px;color:#666;font-weight:normal;">¥330.00</div>
<div class="a" style="left:403px;top:702px;width:177.5px;height:36px;background:#fff;border-radius:4px"></div>
<div class="a" style="left:403px;top:702px;width:71px;height:36px;background:#7f7f7f;border-radius:4px 0 0 4px;color:#fff;font-size:14px;font-weight:bold;line-height:36px;text-align:center">交易手数</div>
<div class="a" style="left:488px;top:710.5px;font-size:19px;line-height:24px;color:#666;font-weight:normal;">5<span class="c">笔</span></div>
<div class="a" style="left:610.5px;top:702px;width:177.5px;height:36px;background:#fff;border-radius:4px"></div>
<div class="a" style="left:610.5px;top:702px;width:71px;height:36px;background:#26c7f6;border-radius:4px 0 0 4px;color:#fff;font-size:14px;font-weight:bold;line-height:36px;text-align:center">委托金额</div>
<div class="a" style="left:695.5px;top:710.5px;font-size:19px;line-height:24px;color:#666;font-weight:normal;">¥500.0</div>
<div class="a" style="left:818px;top:702px;width:177.5px;height:36px;background:#fff;border-radius:4px"></div>
<div class="a" style="left:818px;top:702px;width:71px;height:36px;background:#fd5a4a;border-radius:4px 0 0 4px;color:#fff;font-size:14px;font-weight:bold;line-height:36px;text-align:center">有效金额</div>
<div class="a" style="left:903px;top:710.5px;font-size:19px;line-height:24px;color:#666;font-weight:normal;">¥400</div>
<div class="a" style="left:1025.5px;top:702px;width:177.5px;height:36px;background:#fff;border-radius:4px"></div>
<div class="a" style="left:1025.5px;top:702px;width:71px;height:36px;background:#4ccfcf;border-radius:4px 0 0 4px;color:#fff;font-size:14px;font-weight:bold;line-height:36px;text-align:center">无效金额</div>
<div class="a" style="left:1110.5px;top:710.5px;font-size:19px;line-height:24px;color:#666;font-weight:normal;">¥0</div>
<div class="a" style="left:1233.5px;top:702px;width:177.5px;height:36px;background:#fff;border-radius:4px"></div>
<div class="a" style="left:1233.5px;top:702px;width:71px;height:36px;background:#7f7f7f;border-radius:4px 0 0 4px;color:#fff;font-size:14px;font-weight:bold;line-height:36px;text-align:center">手续费</div>
<div class="a" style="left:1318.5px;top:710.5px;font-size:19px;line-height:24px;color:#666;font-weight:normal;">¥0</div>
<svg class="a" style="left:508px;top:230px" width="152" height="76" viewBox="0 0 1439 720"><path d="M95,135 C150,140 180,190 165,235 C155,265 120,280 100,268 C130,220 125,175 95,135 Z" fill="#1a6ef6"/><path d="M80,305 C60,400 50,520 62,590 C72,645 140,648 155,600 C165,540 145,470 80,305 Z" fill="#1a6ef6"/><path d="M135,480 C175,330 250,180 350,85" fill="none" stroke="#1a6ef6" stroke-width="18" stroke-linecap="round" stroke-linejoin="round"/><path d="M310,95 C330,62 372,58 382,85 C392,112 378,132 362,142 C345,120 330,105 310,95 Z" fill="#1a6ef6"/><path d="M320,130 C380,118 470,122 535,148 C548,165 532,182 505,186 C450,182 400,196 378,222 C362,252 332,258 318,236 C303,200 308,160 320,130 Z" fill="#1a6ef6"/><path d="M468,178 L522,196 C462,330 382,482 342,602 C330,642 290,642 284,610 C300,480 380,330 468,178 Z" fill="#1a6ef6"/><path d="M430,312 C520,305 610,340 662,385" fill="none" stroke="#1a6ef6" stroke-width="55" stroke-linecap="round" stroke-linejoin="round"/><path d="M600,405 C595,470 582,528 552,572" fill="none" stroke="#1a6ef6" stroke-width="57" stroke-linecap="round" stroke-linejoin="round"/><path d="M300,478 L598,415" fill="none" stroke="#1a6ef6" stroke-width="26" stroke-linecap="round" stroke-linejoin="round"/><path d="M318,545 C400,525 480,540 552,575" fill="none" stroke="#1a6ef6" stroke-width="52" stroke-linecap="round" stroke-linejoin="round"/><path d="M452,345 L470,420" fill="none" stroke="#1a6ef6" stroke-width="39" stroke-linecap="round" stroke-linejoin="round"/><path d="M938,185 C980,198 978,252 958,292 C922,352 872,402 822,438 C806,400 822,360 850,332 C892,282 915,232 938,185 Z" fill="#1a6ef6"/><path d="M838,372 C885,340 950,305 998,322 C1030,352 1002,452 962,522 C912,592 862,628 815,632" fill="none" stroke="#1a6ef6" stroke-width="49" stroke-linecap="round" stroke-linejoin="round"/><path d="M790,522 C835,505 888,498 918,512" fill="none" stroke="#1a6ef6" stroke-width="34" stroke-linecap="round" stroke-linejoin="round"/><path d="M1110,72 C1142,68 1162,90 1152,140 C1132,300 1122,480 1122,650 C1117,682 1090,677 1080,642 C1060,560 1075,300 1075,100 C1075,80 1090,72 1110,72 Z" fill="#1a6ef6"/><path d="M1120,378 C1200,378 1300,388 1378,418 C1422,448 1404,502 1342,512 C1310,502 1300,472 1290,452 C1230,432 1170,412 1120,402 Z" fill="#1a6ef6"/></svg>
<svg class="a" style="left:660px;top:230px" width="152" height="76" viewBox="0 0 1439 720"><path d="M125,152 C182,158 218,200 208,242 C198,272 162,282 145,276 C166,232 160,190 125,152 Z" fill="#1a6ef6"/><path d="M52,322 C100,355 135,395 152,425 C175,395 195,365 218,342 C205,398 185,440 168,472 C125,432 85,382 52,322 Z" fill="#1a6ef6"/><path d="M150,438 C178,450 182,502 162,562 C142,622 122,662 86,668 C55,662 58,622 80,582 C110,532 135,482 150,438 Z" fill="#1a6ef6"/><path d="M288,118 C380,98 450,55 530,56 C552,68 545,96 512,112 C452,140 382,152 332,152 C302,152 278,138 288,118 Z" fill="#1a6ef6"/><path d="M318,128 C352,134 362,172 352,222 C322,382 292,522 272,642 C262,672 232,662 226,632 C250,482 290,322 318,128 Z" fill="#1a6ef6"/><path d="M402,185 L462,228" fill="none" stroke="#1a6ef6" stroke-width="55" stroke-linecap="round" stroke-linejoin="round"/><path d="M378,298 C452,262 560,262 588,302 C602,352 562,420 502,478" fill="none" stroke="#1a6ef6" stroke-width="52" stroke-linecap="round" stroke-linejoin="round"/><path d="M382,300 L402,495" fill="none" stroke="#1a6ef6" stroke-width="39" stroke-linecap="round" stroke-linejoin="round"/><path d="M395,402 L520,382" fill="none" stroke="#1a6ef6" stroke-width="26" stroke-linecap="round" stroke-linejoin="round"/><path d="M440,330 L450,370" fill="none" stroke="#1a6ef6" stroke-width="32" stroke-linecap="round" stroke-linejoin="round"/><path d="M432,485 C460,560 480,620 495,655" fill="none" stroke="#1a6ef6" stroke-width="47" stroke-linecap="round" stroke-linejoin="round"/><path d="M345,592 L432,562" fill="none" stroke="#1a6ef6" stroke-width="31" stroke-linecap="round" stroke-linejoin="round"/><path d="M505,505 C565,532 615,552 632,576" fill="none" stroke="#1a6ef6" stroke-width="47" stroke-linecap="round" stroke-linejoin="round"/><path d="M818,212 C880,198 950,182 1000,188 C1022,198 1018,225 990,236 C930,252 870,252 830,242 C808,236 803,220 818,212 Z" fill="#1a6ef6"/><path d="M978,228 L1022,248 C982,382 892,522 792,642 C762,668 728,642 740,600 C822,482 922,362 978,228 Z" fill="#1a6ef6"/><path d="M890,430 C905,480 920,540 930,580" fill="none" stroke="#1a6ef6" stroke-width="34" stroke-linecap="round" stroke-linejoin="round"/><path d="M965,405 C1012,425 1012,522 992,602" fill="none" stroke="#1a6ef6" stroke-width="44" stroke-linecap="round" stroke-linejoin="round"/><path d="M1165,100 C1250,92 1308,112 1298,162 C1280,232 1240,292 1192,332" fill="none" stroke="#1a6ef6" stroke-width="52" stroke-linecap="round" stroke-linejoin="round"/><path d="M1135,175 C1105,252 1095,332 1102,402" fill="none" stroke="#1a6ef6" stroke-width="60" stroke-linecap="round" stroke-linejoin="round"/><path d="M1145,352 C1252,342 1352,352 1390,422 C1410,522 1362,602 1282,638 C1222,650 1162,622 1132,600" fill="none" stroke="#1a6ef6" stroke-width="60" stroke-linecap="round" stroke-linejoin="round"/><path d="M1068,518 C1152,492 1242,472 1308,492" fill="none" stroke="#1a6ef6" stroke-width="52" stroke-linecap="round" stroke-linejoin="round"/></svg>
</div></body></html>
